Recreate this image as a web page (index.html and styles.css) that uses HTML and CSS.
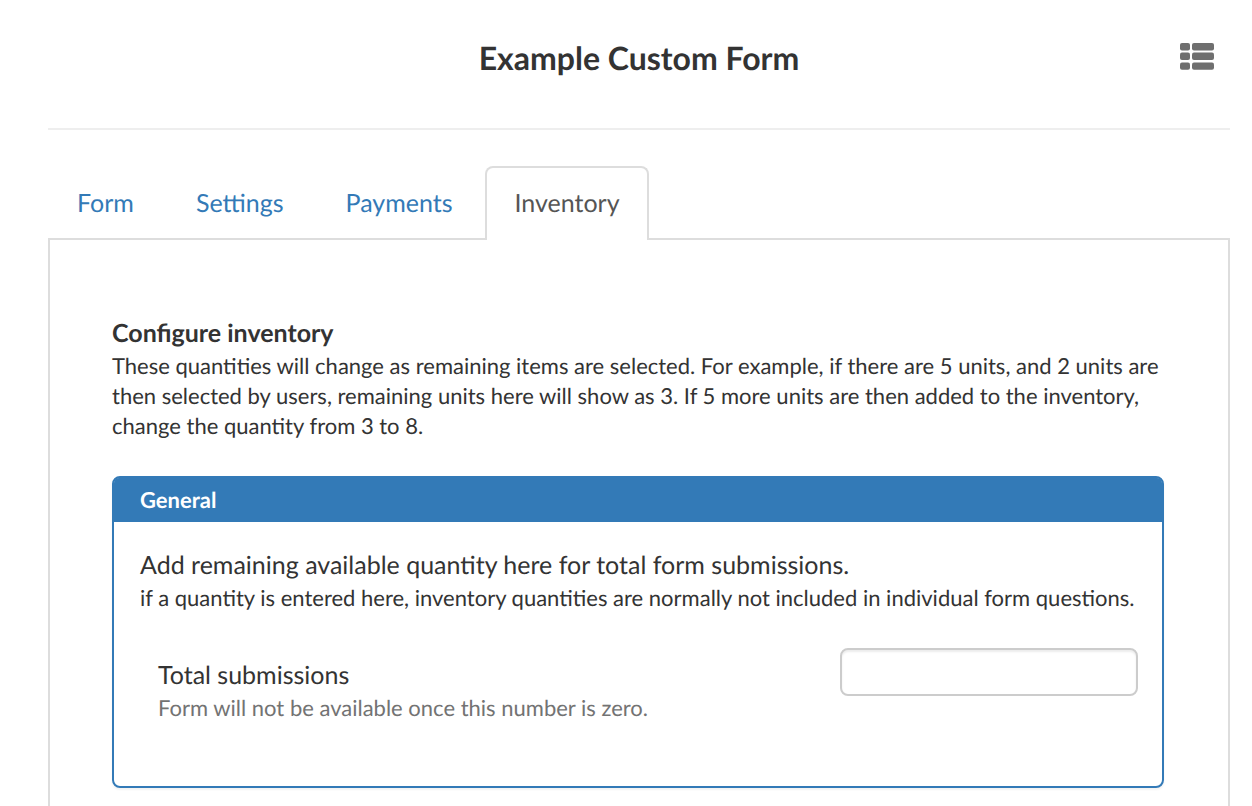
FILE: index.html
```
<!DOCTYPE html>
<html lang="en">
<head>
    <meta charset="UTF-8">
    <meta name="viewport" content="width=device-width, initial-scale=1.0">
    <title>Example Custom Form</title>
    <link rel="stylesheet" href="styles.css">
</head>
<body>
    <header class="page_header">
        <h1>Example Custom Form</h1>
        <button type="button" class="list_btn" aria-label="List">
            <svg width="34" height="28" viewBox="0 0 34 28" fill="#6f6f6f">
                <rect x="0" y="0" width="10" height="7.4" rx="2"/>
                <rect x="12" y="0" width="22" height="7.4" rx="2"/>
                <rect x="0" y="9.6" width="10" height="7.4" rx="2"/>
                <rect x="12" y="9.6" width="22" height="7.4" rx="2"/>
                <rect x="0" y="19.4" width="10" height="7.4" rx="2"/>
                <rect x="12" y="19.4" width="22" height="7.4" rx="2"/>
            </svg>
        </button>
    </header>
    <nav>
        <ul class="tabs">
            <li><a href="#form">Form</a></li>
            <li><a href="#settings">Settings</a></li>
            <li><a href="#payments">Payments</a></li>
            <li class="active"><a href="#inventory">Inventory</a></li>
        </ul>
    </nav>
    <main class="tab_content" id="inventory">
        <h2>Configure inventory</h2>
        <p class="small_text">These quantities will change as remaining items are selected. For example, if there are 5 units, and 2 units are then selected by users, remaining units here will show as 3. If 5 more units are then added to the inventory, change the quantity from 3 to 8.</p>
        <section class="panel">
            <h3 class="panel_heading">General</h3>
            <div class="panel_body">
                <p>Add remaining available quantity here for total form submissions.</p>
                <p class="small_text">if a quantity is entered here, inventory quantities are normally not included in individual form questions.</p>
                <div class="form_row">
                    <div class="form_label">
                        <label for="total">Total submissions</label>
                        <p class="small_text help_text" id="total_help">Form will not be available once this number is zero.</p>
                    </div>
                    <input type="text" id="total" class="form_input" aria-describedby="total_help">
                </div>
            </div>
        </section>
    </main>
</body>
</html>
```
FILE: styles.css
```
*{
    box-sizing: border-box;
    margin: 0;
    padding: 0;
}
body{
    padding: 0 22px 0 48px;
    font-family: Lato, "Liberation Sans", sans-serif;
    font-size: 25px;
    line-height: 36px;
    color: #333;
    background-color: #fff;
    text-rendering: geometricPrecision;
}
.page_header{
    display: grid;
    grid-template-columns: 50px 1fr 50px;
    align-items: start;
    padding: 35px 0 47px;
    border-bottom: 2px solid #eee;
}
.page_header h1{
    grid-column: 2;
    font-size: 32px;
    line-height: 46px;
    text-align: center;
}
.list_btn{
    display: flex;
    padding: 8px 0;
    border: 0;
    background: none;
    cursor: pointer;
}
.tabs{
    display: flex;
    gap: 4px;
    margin-top: 36px;
    list-style: none;
}
.tabs a{
    display: block;
    padding: 17px 27px;
    border: 2px solid transparent;
    border-bottom: 0;
    border-radius: 8px 8px 0 0;
    color: #337ab7;
    text-decoration: none;
}
/* covers the top border of the content below */
.tabs .active{
    position: relative;
    margin-bottom: -2px;
}
.tabs .active a{
    padding-bottom: 19px;
    border-color: #ddd;
    color: #555;
    background-color: #fff;
}
.tab_content{
    padding: 75px 64px 64px 62px;
    border: 2px solid #ddd;
}
.tab_content h2{
    font-size: 25px;
    line-height: 36px;
}
.small_text{
    font-size: 22px;
    line-height: 30px;
}
.panel{
    margin-top: 35px;
    border: 2px solid #337ab7;
    border-radius: 8px;
    box-shadow: 0 2px 2px rgba(0,0,0,0.05);
}
.panel_heading{
    padding: 7px 26px;
    font-size: 22px;
    line-height: 30px;
    color: #fff;
    background-color: #337ab7;
    border-radius: 5px 5px 0 0;
}
.panel_body{
    padding: 25px 24px 63px 26px;
}
.form_row{
    display: flex;
    justify-content: space-between;
    align-items: flex-start;
    gap: 30px;
    margin-top: 35px;
    padding-left: 18px;
}
.form_label{
    padding-top: 9px;
}
.help_text{
    color: #737373;
}
.form_input{
    width: 298px;
    height: 48px;
    padding: 6px 12px;
    border: 2px solid #ccc;
    border-radius: 8px;
    font: inherit;
    font-size: 22px;
    color: #555;
    box-shadow: inset 0 2px 2px rgba(0,0,0,0.075);
}
```
